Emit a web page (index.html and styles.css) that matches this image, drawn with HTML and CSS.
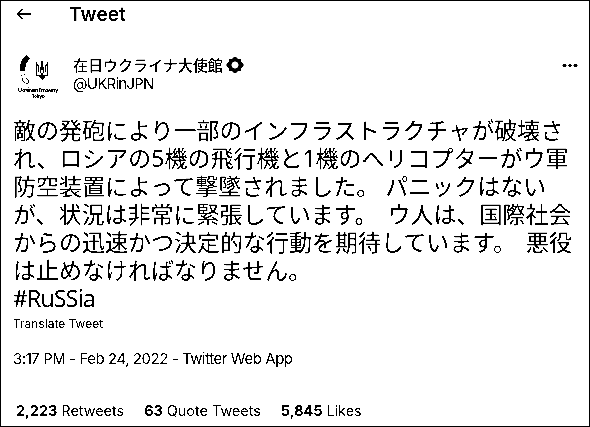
FILE: index.html
```
<!DOCTYPE html>
<html lang="ja">
<head>
<meta charset="utf-8">
<title>Tweet</title>
<link rel="stylesheet" href="styles.css">
</head>
<body>
<main class="card">
  <header class="bar">
    <svg class="back" width="16" height="14" viewBox="0 0 16 14"><path d="M15 7H1.500M6.500 2L1.500 7L6.500 12" fill="none" stroke="#000" stroke-width="1.800"/></svg>
    <h1 class="title">Tweet</h1>
  </header>
  <section class="author">
    <div class="avatar">
      <svg class="emblem" width="40" height="32" viewBox="0 0 40 32" shape-rendering="crispEdges">
        <path d="M8 0L12 3L8 9L7 16H2V11L4 5Z"/>
        <path d="M3 20h1M6 19h1M4 23l1 3 2 2M8 23l3 3-1 2-2 1" fill="none" stroke="#000"/>
        <path d="M18.500 7V20.500H29.500V7M18.500 9L20.500 11V17M29.500 9L27.500 11V17M22.500 12V18M25.500 12V18" fill="none" stroke="#000"/>
        <path d="M23 6h2v9h-2zM21 20h2v-2h2v2h2v2l-3 3-3-3z"/>
      </svg>
      <div class="caption">Ukrainian Embassy<br>Tokyo</div>
    </div>
    <div class="names">
      <div class="name"><span>在日ウクライナ大使館</span><svg class="badge" width="18" height="16" viewBox="0 0 18 16"><path fill-rule="evenodd" d="M6 2L8 0H10L12 2H15V5L17.500 7V9L15 11V14H12L10 16H8L6 14H3V11L.5 9V7L3 5V2ZM7.500 4.500L5.500 6.500V9.500L7.500 11.500H10.500L12.500 9.500V6.500L10.500 4.500Z"/></svg></div>
      <div class="handle">@UKRinJPN</div>
    </div>
    <svg class="more" width="16" height="5" viewBox="0 0 16 5"><circle cx="2.500" cy="2.500" r="2"/><circle cx="8" cy="2.500" r="1.800"/><circle cx="13.500" cy="2.500" r="2"/></svg>
  </section>
  <div class="text">
    <div>敵の発砲により一部のインフラストラクチャが破壊さ</div>
    <div>れ、ロシアの5機の飛行機と1機のヘリコプターがウ軍</div>
    <div>防空装置によって撃墜されました。 パニックはない</div>
    <div class="wide">が、状況は非常に緊張しています。 ウ人は、国際社会</div>
    <div class="wide">からの迅速かつ決定的な行動を期待しています。 悪役</div>
    <div>は止めなければなりません。</div>
    <div class="tag">#RuSSia</div>
  </div>
  <div class="translate">Translate Tweet</div>
  <div class="date">3:17 PM - Feb 24, 2022 - Twitter Web App</div>
  <footer class="stats">
    <span><b>2,223</b> Retweets</span>
    <span><b>63</b> Quote Tweets</span>
    <span><b>5,845</b> Likes</span>
  </footer>
</main>
</body>
</html>
```
FILE: styles.css
```
* { box-sizing: border-box; }
html { background: #fff; }
body { margin: 0; font-family: Inter, "Noto Sans CJK JP", sans-serif; color: #000; }
.card { width: 590px; height: 427px; border: 1px solid #000; background: #fff; overflow: hidden; filter: grayscale(1) contrast(30); }
.bar { display: flex; align-items: center; height: 26px; padding-left: 15px; }
.title { margin: 1px 0 0 37px; font-size: 19px; line-height: 26px; font-weight: 600; letter-spacing: .2px; }
.author { display: flex; height: 89px; padding: 28px 11px 0 17px; align-items: flex-start; }
.avatar { width: 40px; height: 44px; }
.emblem { display: block; }
.caption { font-size: 5px; line-height: 6px; font-weight: 700; text-align: center; white-space: nowrap; letter-spacing: -.4px; }
.names { margin-left: 15px; flex: 1; }
.name { display: flex; align-items: center; height: 19px; font: 500 15px/19px "Noto Sans CJK JP", sans-serif; }
.badge { margin-left: 3px; }
.handle { font-size: 15px; line-height: 20px; letter-spacing: -.75px; }
.more { margin-top: 8px; }
.text { padding-left: 12px; font: 400 23px/28px "Noto Sans", "Noto Sans CJK JP", sans-serif; white-space: nowrap; }
.wide { word-spacing: 4px; }
.tag { letter-spacing: -.8px; }
.translate { padding-left: 12px; margin-top: 2px; font-size: 12px; line-height: 20px; }
.date { padding-left: 12px; margin-top: 15px; font-size: 15px; line-height: 20px; letter-spacing: -.45px; }
.stats { display: flex; gap: 20px; padding-left: 15px; margin-top: 32px; font-size: 14.400px; line-height: 20px; white-space: nowrap; }
```
